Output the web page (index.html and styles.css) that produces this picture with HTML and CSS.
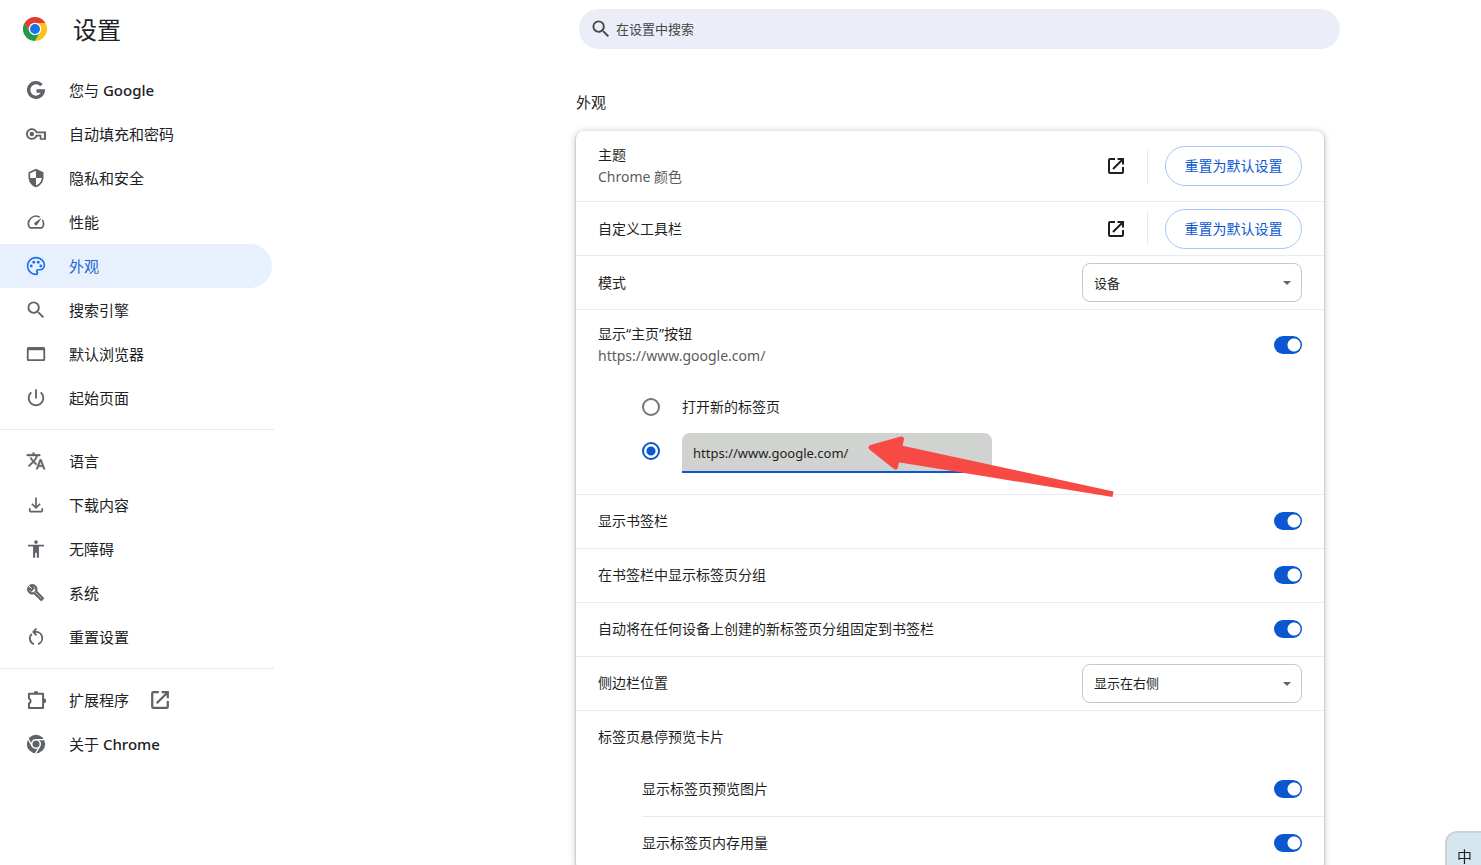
FILE: index.html
```html
<!DOCTYPE html>
<html lang="zh-CN">
<head>
<meta charset="utf-8">
<meta name="viewport" content="width=device-width, initial-scale=1">
<title>设置 - 外观</title>
<link rel="stylesheet" href="styles.css">
</head>
<body>
<svg class="defs" aria-hidden="true">
  <symbol id="i-open" viewBox="0 0 18 18"><path d="M8 2H3a1 1 0 0 0-1 1v12a1 1 0 0 0 1 1h12a1 1 0 0 0 1-1V10M10.500 2H16V7.500M16 2L6 12" fill="none" stroke="currentColor" stroke-width="2"/></symbol>
  <symbol id="i-search" viewBox="1.500 1.500 21 21"><path d="M15.500 14h-.79l-.28-.27A6.471 6.471 0 0 0 16 9.500 6.500 6.500 0 1 0 9.500 16c1.610 0 3.090-.59 4.230-1.570l.27.28v.79l5 4.990L20.490 19l-4.990-5zm-6 0C7.010 14 5 11.990 5 9.500S7.010 5 9.500 5 14 7.010 14 9.500 11.990 14 9.500 14z"/></symbol>
</svg>
<div class="page">
  <aside class="sidebar">
    <div class="brand">
      <svg class="logo" viewBox="0 0 48 48" aria-hidden="true">
        <path fill="#e33b2e" d="M24 24L3.200 12A24 24 0 0 1 44.800 12z"/>
        <path fill="#fcc31e" d="M44.800 12A24 24 0 0 1 24 48L34.400 30 24 12z"/>
        <path fill="#27964a" d="M3.200 12A24 24 0 0 0 24 48L34.400 30 24 24 13.600 30z"/>
        <path fill="#e33b2e" d="M3.200 12L13.600 30 24 24 24 12z"/>
        <circle cx="24" cy="24" r="12.500" fill="#fff"/><circle cx="24" cy="24" r="10" fill="#1a73e8"/>
      </svg>
      <h1>设置</h1>
    </div>
    <nav class="menu">
      <a href="#you"><svg viewBox="0 0 24 24"><path d="M18.600 6.100A8.800 8.800 0 1 0 20.700 13.200H12.600" fill="none" stroke="currentColor" stroke-width="4"/></svg><span>您与 <b>Google</b></span></a>
      <a href="#autofill"><svg viewBox="0 0 24 24"><path d="M22.500 19h-6v-4h-3c-1.300 2.600-3.800 4-6.500 4-3.860 0-7-3.140-7-7s3.140-7 7-7c2.720 0 5.170 1.400 6.500 4h10.500v10zm-4-2h3v-6H11.940C11.010 8.340 9.110 7.200 7 7.200c-2.760 0-4.800 2.040-4.800 4.800s2.040 4.800 4.800 4.800c2.110 0 4.010-1.140 4.940-3.800H18.500z"/><circle cx="7" cy="12" r="2.700"/></svg>自动填充和密码</a>
      <a href="#privacy"><svg viewBox="0 0 24 24"><path d="M12 1L3 5v6c0 5.550 3.840 10.740 9 12 5.160-1.260 9-6.450 9-12V5l-9-4zm0 11h7c-.53 4.120-3.280 7.790-7 8.940V12H5V6.300l7-3.110z"/></svg>隐私和安全</a>
      <a href="#performance"><svg viewBox="0 0 24 24"><path d="M20.380 8.570l-1.230 1.850a8 8 0 0 1-.22 7.580H5.070A8 8 0 0 1 15.580 6.850l1.850-1.230A10 10 0 0 0 3.350 19a2 2 0 0 0 1.720 1h13.850a2 2 0 0 0 1.740-1 10 10 0 0 0-.27-10.440zm-9.790 6.840a2 2 0 0 0 2.830 0l5.660-8.490-8.490 5.660a2 2 0 0 0 0 2.830z"/></svg>性能</a>
      <a href="#appearance" class="current" aria-current="page"><svg viewBox="0 0 24 24"><path d="M12 23C5.900 23 1 18.100 1 12S5.900 1 12 1s11 4.500 11 10c0 3.600-2.900 6.500-6.500 6.500h-2c-.3 0-.5.2-.5.500 0 .8.800.9.800 2.300A2.700 2.700 0 0 1 12 23zm0-20c-5 0-9 4-9 9s4 9 9 9c.3 0 .6-.2.600-.6 0-.6-.8-1-.8-2.300 0-1.500 1.200-2.600 2.700-2.600h2c2.500 0 4.500-2 4.500-4.500C21 6.600 17 3 12 3z"/><circle cx="6.300" cy="12" r="1.700"/><circle cx="9.300" cy="7.500" r="1.700"/><circle cx="14.700" cy="7.500" r="1.700"/><circle cx="17.700" cy="12" r="1.700"/></svg>外观</a>
      <a href="#search"><svg><use href="#i-search"/></svg>搜索引擎</a>
      <a href="#browser"><svg viewBox="0 0 24 24"><path d="M3 3.500h18a2 2 0 0 1 2 2v13a2 2 0 0 1-2 2H3a2 2 0 0 1-2-2v-13a2 2 0 0 1 2-2zM3.200 7.500v10.800h17.600V7.500z" fill-rule="evenodd"/></svg>默认浏览器</a>
      <a href="#startup"><svg viewBox="1 1 22 22"><path d="M13 2.500h-2v10h2zM17.830 5.170l-1.420 1.420C17.990 7.860 19 9.810 19 12c0 3.870-3.130 7-7 7s-7-3.130-7-7c0-2.190 1.010-4.140 2.580-5.420L6.170 5.170C4.230 6.820 3 9.260 3 12c0 4.970 4.030 9 9 9s9-4.030 9-9c0-2.740-1.230-5.180-3.170-6.830z"/></svg>起始页面</a>
      <hr>
      <a href="#languages"><svg viewBox="0 0 24 24"><path d="M12.870 15.070l-2.540-2.510.03-.03c1.740-1.940 2.980-4.170 3.710-6.530H17V4h-7V2H8v2H1v2h11.170C11.500 7.920 10.440 9.750 9 11.350 8.070 10.320 7.300 9.190 6.690 8h-2c.73 1.630 1.730 3.170 2.980 4.560l-5.090 5.020L4 19l5-5 3.110 3.110zM18.500 10h-2L12 22h2l1.120-3h4.750L21 22h2zm-2.620 7l1.620-4.330L19.120 17z" stroke="currentColor" stroke-width=".5"/></svg>语言</a>
      <a href="#downloads"><svg viewBox="0 0 24 24"><path d="M12 3v12M7 10.500l5 5 5-5M4.500 16v3a1 1 0 0 0 1 1h13a1 1 0 0 0 1-1v-3" fill="none" stroke="currentColor" stroke-width="2"/></svg>下载内容</a>
      <a href="#accessibility"><svg viewBox="0 0 24 24"><path d="M12 1.500a2.200 2.200 0 1 1 0 4.400 2.200 2.200 0 0 1 0-4.400zM21.500 9H15.500v13.500h-2.500v-6h-2v6H8.500V9H2.500V7h19z"/></svg>无障碍</a>
      <a href="#system"><svg viewBox="-1 -1 27 27"><path d="M22.610 18.990l-9.080-9.080c.93-2.340.45-5.100-1.440-7C9.790.61 6.210.4 3.660 2.260L7.500 6.110 6.080 7.520 2.250 3.690C.39 6.230.6 9.820 2.900 12.110c1.860 1.860 4.570 2.350 6.890 1.480l9.110 9.110c.39.39 1.020.39 1.410 0l2.300-2.300c.4-.38.4-1.010 0-1.410zm-3 1.600l-9.460-9.460c-.61.45-1.290.72-2 .82-1.360.2-2.790-.21-3.830-1.250C3.370 9.760 2.930 8.500 3 7.260l3.090 3.090 4.240-4.240-3.090-3.090c1.240-.07 2.490.37 3.440 1.310 1.080 1.080 1.490 2.570 1.240 3.960-.12.71-.42 1.370-.88 1.960l9.450 9.450z" stroke="currentColor" stroke-width="1.200"/></svg>系统</a>
      <a href="#reset"><svg viewBox="0 0 24 24"><path d="M9.500 20.500A7.300 7.300 0 0 1 7 8.200M14.500 20.500A7.500 7.500 0 0 0 11 6H9M12.500 2L8.800 6l3.700 4" fill="none" stroke="currentColor" stroke-width="2.200"/></svg>重置设置</a>
      <hr>
      <a href="#extensions"><svg viewBox="0 0 24 24"><path d="M3.500 4.500H20.500V21.500H3.500V16.500a3.600 3.600 0 0 0 0-6.500z" fill="none" stroke="currentColor" stroke-width="2.400" stroke-linejoin="round"/><path d="M9.300 4a2.700 2.700 0 0 1 5.400 0zM21.500 10.300a2.700 2.700 0 0 1 0 5.400z"/></svg>扩展程序<svg class="external"><use href="#i-open"/></svg></a>
      <a href="#about"><svg viewBox="0 0 24 24"><circle cx="12" cy="12" r="11"/><path d="M12 6.800h10.500M7.500 14.500L2.500 5.800M16.500 14.500L11.500 23.200" stroke="#fff" stroke-width="1.600"/><circle cx="12" cy="12" r="6" fill="#fff"/><circle cx="12" cy="12" r="4.200"/></svg><span>关于 <b>Chrome</b></span></a>
    </nav>
  </aside>
  <main class="content">
    <label class="search">
      <svg aria-hidden="true"><use href="#i-search"/></svg>
      <input type="search" placeholder="在设置中搜索" aria-label="在设置中搜索">
    </label>
    <section class="section">
      <h2>外观</h2>
      <div class="card">
        <div class="row tall">
          <div class="text"><span>主题</span><small>Chrome 颜色</small></div>
          <button class="icon-button" type="button" aria-label="打开主题"><svg><use href="#i-open"/></svg></button>
          <span class="separator"></span>
          <button class="pill" type="button">重置为默认设置</button>
        </div>
        <div class="row">
          <div class="text">自定义工具栏</div>
          <button class="icon-button" type="button" aria-label="打开自定义工具栏"><svg><use href="#i-open"/></svg></button>
          <span class="separator"></span>
          <button class="pill" type="button">重置为默认设置</button>
        </div>
        <div class="row">
          <label class="text" for="mode">模式</label>
          <div class="dropdown"><select id="mode"><option>设备</option></select></div>
        </div>
        <div class="group">
          <div class="row tall">
            <label class="text" for="home"><span>显示“主页”按钮</span><small>https://www.google.com/</small></label>
            <input class="switch" type="checkbox" id="home" checked>
          </div>
          <div class="choices">
            <label class="choice"><input type="radio" name="homepage">打开新的标签页</label>
            <div class="choice">
              <input type="radio" name="homepage" aria-label="输入自定义网址" checked>
              <div class="url">
                <input type="text" value="https://www.google.com/" aria-label="自定义网址">
                <svg class="arrow" viewBox="0 0 250 68" aria-hidden="true"><path d="M4 14.500L34.500 6 28.500 34z" stroke="#f74a45" stroke-width="5" stroke-linejoin="round"/><path d="M32 12L246.500 58.500 245.500 64 30 29z"/></svg>
              </div>
            </div>
          </div>
        </div>
        <div class="row toggle"><label class="text" for="bookmarks">显示书签栏</label><input class="switch" type="checkbox" id="bookmarks" checked></div>
        <div class="row toggle"><label class="text" for="groups">在书签栏中显示标签页分组</label><input class="switch" type="checkbox" id="groups" checked></div>
        <div class="row toggle"><label class="text" for="pin">自动将在任何设备上创建的新标签页分组固定到书签栏</label><input class="switch" type="checkbox" id="pin" checked></div>
        <div class="row toggle">
          <label class="text" for="side">侧边栏位置</label>
          <div class="dropdown"><select id="side"><option>显示在右侧</option></select></div>
        </div>
        <div class="row plain"><div class="text">标签页悬停预览卡片</div></div>
        <div class="nested">
          <div class="row toggle"><label class="text" for="preview">显示标签页预览图片</label><input class="switch" type="checkbox" id="preview" checked></div>
          <div class="row toggle"><label class="text" for="memory">显示标签页内存用量</label><input class="switch" type="checkbox" id="memory" checked></div>
        </div>
      </div>
    </section>
  </main>
</div>
<div class="ime">中</div>
</body>
</html>
```
FILE: styles.css
```css
* { box-sizing: border-box; }

body {
  margin: 0;
  background: #fff;
  color: #1f1f1f;
  font: 14px/22px "Noto Sans", "Noto Sans CJK SC", sans-serif;
}

button, input, select { font: inherit; color: inherit; margin: 0; }
svg { fill: currentColor; }
.defs { display: none; }

.page {
  display: grid;
  grid-template-columns: 274px minmax(0, 1fr);
  height: 100vh;
  overflow: hidden;
}

.sidebar { color: #202124; }

.brand {
  display: flex;
  align-items: center;
  gap: 26px;
  height: 60px;
  margin-bottom: 8px;
  padding-left: 23px;
}
.logo { width: 24px; height: 24px; margin-bottom: 2px; }
h1 { margin: 0; font-size: 24px; font-weight: 400; line-height: 32px; }

.menu a {
  display: flex;
  align-items: center;
  height: 44px;
  margin-right: 2px;
  padding-left: 26px;
  border-radius: 0 22px 22px 0;
  color: inherit;
  font-size: 15px;
  text-decoration: none;
}
.menu b { font-weight: 500; }
.menu svg { width: 20px; height: 20px; margin-right: 23px; color: #5f6368; }
.menu .external { margin: 0 0 0 21px; }
.menu .current { background: #e8f0fe; color: #1967d2; }
.menu .current svg { color: #1a73e8; }
.menu hr { height: 1px; margin: 9px 0; border: 0; background: #e8e8e8; }

.content { overflow: auto; scrollbar-width: none; }

.search, .section { width: calc(100% - 48px); }
.search {
  display: flex;
  align-items: center;
  gap: 5px;
  max-width: 761px;
  height: 40px;
  margin: 9px 141px 0 auto;
  padding: 0 12px;
  border-radius: 20px;
  background: #ebeef8;
  color: #474747;
}
.search svg { width: 20px; height: 20px; }
.search input {
  flex: 1;
  min-width: 0;
  padding: 0;
  border: 0;
  outline: 0;
  background: none;
  font-size: 13px;
}
.search input::placeholder { color: #474747; opacity: 1; }

.section { max-width: 748px; margin: 0 157px 0 auto; }
h2 { margin: 0; padding: 42px 0 18px; font-size: 15px; font-weight: 400; line-height: 22px; }

.card {
  border-radius: 8px;
  box-shadow: 0 1px 2px 0 rgba(0, 0, 0, .4), 0 1px 6px 2px rgba(0, 0, 0, .14);
}

.row {
  display: flex;
  align-items: center;
  min-height: 54px;
  padding: 0 22px;
  border-bottom: 1px solid #ebebeb;
}
.row.tall { min-height: 71px; }
.row.toggle { padding-bottom: 1px; }
.row.plain { min-height: 52px; border: 0; }
.text { display: flex; flex: 1; flex-direction: column; min-width: 0; }
small { color: #5c5c5c; font-size: 14px; }

.icon-button {
  display: grid;
  place-items: center;
  width: 36px;
  height: 36px;
  padding: 0;
  border: 0;
  background: none;
}
.icon-button svg { width: 18px; height: 18px; }
.separator { width: 1px; height: 35px; margin: 0 17px 0 13px; background: #ebebeb; }
.pill {
  min-width: 137px;
  height: 40px;
  padding: 0 17px;
  border: 1px solid #a8c7fa;
  border-radius: 20px;
  background: #fff;
  color: #0b57d0;
}

.dropdown { position: relative; width: 220px; }
.dropdown::after {
  position: absolute;
  top: 18px;
  right: 11px;
  border: 4px solid transparent;
  border-top-color: #5f6368;
  border-bottom: 0;
  content: "";
  pointer-events: none;
}
select {
  display: block;
  width: 100%;
  height: 39px;
  padding: 0 11px;
  border: 1px solid #c7c7c7;
  border-radius: 8px;
  appearance: none;
  background: #fff;
  font-size: 13px;
}

.switch {
  width: 28px;
  height: 18px;
  border-radius: 9px;
  appearance: none;
  background: radial-gradient(circle at 20px 9px, #fff 6px, #0b57d0 7px);
}

.group { padding-bottom: 21px; border-bottom: 1px solid #ebebeb; }
.group .row { min-height: 70px; border: 0; }
.choices { padding: 5px 22px 0 66px; }
.choice { display: flex; align-items: center; gap: 22px; height: 44px; }
.choice input[type="radio"] {
  flex: none;
  width: 18px;
  height: 18px;
  border: 2px solid #757575;
  border-radius: 50%;
  appearance: none;
}
.choice input[type="radio"]:checked {
  border-color: #0b57d0;
  background: radial-gradient(circle, #0b57d0 4px, #fff 5px);
}
.url { position: relative; width: 310px; padding-top: 4px; }
.url input {
  display: block;
  width: 100%;
  height: 40px;
  padding: 2px 11px 0;
  border: 0;
  border-bottom: 2px solid #0b57d0;
  border-radius: 8px 8px 0 0;
  outline: 0;
  background: #d1d3d0;
  font-size: 13px;
}
.arrow { position: absolute; top: 4px; left: 185px; width: 250px; height: 68px; fill: #f74a45; }

.nested { padding-left: 66px; }
.nested .row { padding-left: 0; }

.ime {
  position: fixed;
  right: 0;
  bottom: 0;
  width: 36px;
  padding: 14px 0 0 10px;
  border: 2px solid #d0d2d4;
  border-width: 2px 0 0 2px;
  border-radius: 12px 0 0;
  background: #d4e7ee;
  font-size: 15px;
  line-height: 18px;
}
```
